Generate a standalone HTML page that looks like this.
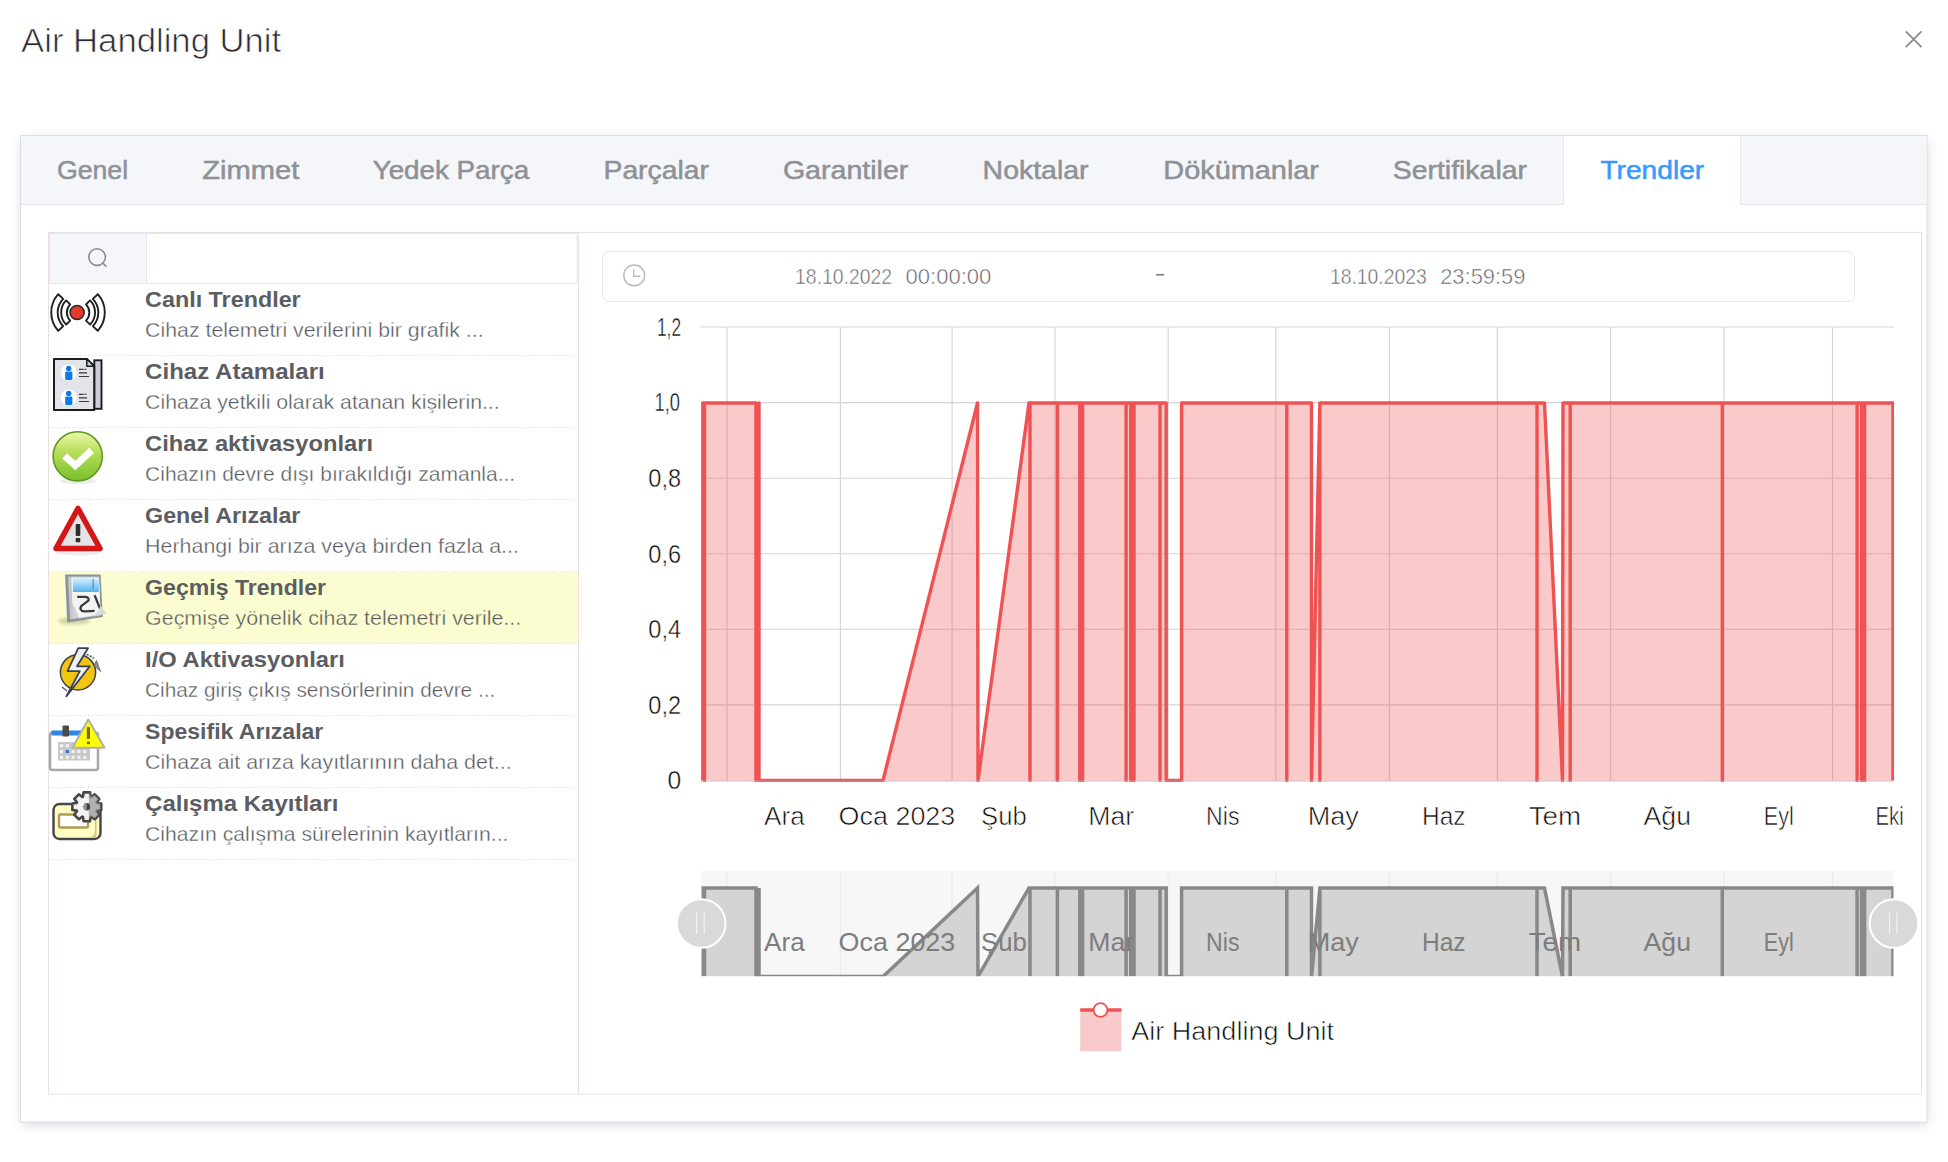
<!DOCTYPE html>
<html><head><meta charset="utf-8"><title>Air Handling Unit</title>
<style>
html,body{margin:0;padding:0;background:#fff;width:1948px;height:1162px;overflow:hidden;}
svg{position:absolute;left:0;top:0;display:block;}
text{font-family:"Liberation Sans",sans-serif;}
</style></head><body>
<svg width="1948" height="1162" viewBox="0 0 1948 1162">
<defs>
<filter id="shadow" x="-5%" y="-5%" width="110%" height="110%"><feGaussianBlur stdDeviation="6"/></filter>
<linearGradient id="gGreen" x1="0" y1="0" x2="0" y2="1"><stop offset="0" stop-color="#eef7a8"/><stop offset="0.45" stop-color="#b3dc55"/><stop offset="1" stop-color="#78bf2c"/></linearGradient>
<linearGradient id="gBlue" x1="0" y1="0" x2="0" y2="1"><stop offset="0" stop-color="#d6f0ff"/><stop offset="1" stop-color="#52b4f0"/></linearGradient>
<filter id="blur2" x="-50%" y="-50%" width="200%" height="200%"><feGaussianBlur stdDeviation="1.8"/></filter>
<clipPath id="plotclip"><rect x="701" y="300" width="1193" height="482"/></clipPath>
<clipPath id="navclip"><rect x="701.5" y="860" width="1192" height="116.3"/></clipPath>
</defs>
<text x="21.1" y="51.8" font-size="32.7" fill="#2b2b30" textLength="260.1" lengthAdjust="spacingAndGlyphs" text-anchor="start" stroke="#fff" stroke-width="0.7">Air Handling Unit</text>
<path d="M1905.8 31.4 L1921.5 47.2 M1921.5 31.4 L1905.8 47.2" stroke="#8a8d93" stroke-width="1.8" fill="none"/>
<rect x="21" y="139" width="1906" height="986" fill="#000" opacity="0.14" filter="url(#shadow)"/>
<rect x="20.5" y="135.5" width="1906.5" height="986.5" fill="#fff" stroke="#dcdee7" stroke-width="1"/>
<rect x="21" y="136" width="1905.5" height="68.5" fill="#f5f6fa"/>
<line x1="21" y1="204.5" x2="1926.5" y2="204.5" stroke="#e4e6ef" stroke-width="1"/>
<rect x="1563.5" y="136" width="177" height="69.5" fill="#fff"/>
<line x1="1563.5" y1="136" x2="1563.5" y2="205" stroke="#e4e6ef" stroke-width="1"/>
<line x1="1740.5" y1="136" x2="1740.5" y2="205" stroke="#e4e6ef" stroke-width="1"/>
<text x="56.9" y="178.9" font-size="25.6" fill="#8e9196" textLength="71.2" lengthAdjust="spacingAndGlyphs" text-anchor="start" stroke="#8e9196" stroke-width="0.5">Genel</text>
<text x="202.3" y="178.9" font-size="25.6" fill="#8e9196" textLength="97.1" lengthAdjust="spacingAndGlyphs" text-anchor="start" stroke="#8e9196" stroke-width="0.5">Zimmet</text>
<text x="372.7" y="178.9" font-size="25.6" fill="#8e9196" textLength="156.4" lengthAdjust="spacingAndGlyphs" text-anchor="start" stroke="#8e9196" stroke-width="0.5">Yedek Parça</text>
<text x="603.5" y="178.9" font-size="25.6" fill="#8e9196" textLength="105.4" lengthAdjust="spacingAndGlyphs" text-anchor="start" stroke="#8e9196" stroke-width="0.5">Parçalar</text>
<text x="782.9" y="178.9" font-size="25.6" fill="#8e9196" textLength="125.4" lengthAdjust="spacingAndGlyphs" text-anchor="start" stroke="#8e9196" stroke-width="0.5">Garantiler</text>
<text x="982.6" y="178.9" font-size="25.6" fill="#8e9196" textLength="105.9" lengthAdjust="spacingAndGlyphs" text-anchor="start" stroke="#8e9196" stroke-width="0.5">Noktalar</text>
<text x="1163.3" y="178.9" font-size="25.6" fill="#8e9196" textLength="155.7" lengthAdjust="spacingAndGlyphs" text-anchor="start" stroke="#8e9196" stroke-width="0.5">Dökümanlar</text>
<text x="1392.7" y="178.9" font-size="25.6" fill="#8e9196" textLength="134.3" lengthAdjust="spacingAndGlyphs" text-anchor="start" stroke="#8e9196" stroke-width="0.5">Sertifikalar</text>
<text x="1600.4" y="178.9" font-size="25.6" fill="#3699ff" textLength="103.8" lengthAdjust="spacingAndGlyphs" text-anchor="start" stroke="#3699ff" stroke-width="0.5">Trendler</text>
<rect x="48.5" y="232.5" width="530" height="861.5" fill="#fff" stroke="#ecdfe2" stroke-width="1"/>
<rect x="578.5" y="232.5" width="1343" height="861.5" fill="none" stroke="#ecdfe2" stroke-width="1"/>
<rect x="49" y="233.5" width="97.5" height="50" fill="#f5f6fa"/>
<rect x="49.5" y="233.5" width="527.5" height="50" fill="none" stroke="#e4e6ef" stroke-width="1"/>
<line x1="146.5" y1="233.5" x2="146.5" y2="283.5" stroke="#e4e6ef" stroke-width="1"/>
<circle cx="97.1" cy="257.1" r="8.3" fill="none" stroke="#8a8a8e" stroke-width="1.6"/>
<line x1="103" y1="263.3" x2="106.3" y2="266.6" stroke="#8a8a8e" stroke-width="1.6"/>
<rect x="49" y="572" width="529" height="71.5" fill="#fbfcd0"/>
<text x="145.1" y="307.1" font-size="22.4" fill="#5b5d63" font-weight="bold" textLength="155.6" lengthAdjust="spacingAndGlyphs" text-anchor="start" >Canlı Trendler</text>
<text x="145.1" y="336.8" font-size="20.3" fill="#55575d" textLength="338.5" lengthAdjust="spacingAndGlyphs" text-anchor="start" stroke="#fff" stroke-width="0.35">Cihaz telemetri verilerini bir grafik ...</text>
<line x1="49" y1="355.5" x2="578" y2="355.5" stroke="#e6d9dc" stroke-width="1.2" stroke-dasharray="1.3 2.6"/>
<text x="145.1" y="379.1" font-size="22.4" fill="#5b5d63" font-weight="bold" textLength="179.6" lengthAdjust="spacingAndGlyphs" text-anchor="start" >Cihaz Atamaları</text>
<text x="145.1" y="408.8" font-size="20.3" fill="#55575d" textLength="354.6" lengthAdjust="spacingAndGlyphs" text-anchor="start" stroke="#fff" stroke-width="0.35">Cihaza yetkili olarak atanan kişilerin...</text>
<line x1="49" y1="427.5" x2="578" y2="427.5" stroke="#e6d9dc" stroke-width="1.2" stroke-dasharray="1.3 2.6"/>
<text x="145.1" y="451.1" font-size="22.4" fill="#5b5d63" font-weight="bold" textLength="227.9" lengthAdjust="spacingAndGlyphs" text-anchor="start" >Cihaz aktivasyonları</text>
<text x="145.1" y="480.8" font-size="20.3" fill="#55575d" textLength="370.1" lengthAdjust="spacingAndGlyphs" text-anchor="start" stroke="#fff" stroke-width="0.35">Cihazın devre dışı bırakıldığı zamanla...</text>
<line x1="49" y1="499.5" x2="578" y2="499.5" stroke="#e6d9dc" stroke-width="1.2" stroke-dasharray="1.3 2.6"/>
<text x="145.1" y="523.1" font-size="22.4" fill="#5b5d63" font-weight="bold" textLength="155.3" lengthAdjust="spacingAndGlyphs" text-anchor="start" >Genel Arızalar</text>
<text x="145.1" y="552.8" font-size="20.3" fill="#55575d" textLength="373.8" lengthAdjust="spacingAndGlyphs" text-anchor="start" stroke="#fff" stroke-width="0.35">Herhangi bir arıza veya birden fazla a...</text>
<line x1="49" y1="571.5" x2="578" y2="571.5" stroke="#e6d9dc" stroke-width="1.2" stroke-dasharray="1.3 2.6"/>
<text x="145.1" y="595.1" font-size="22.4" fill="#5b5d63" font-weight="bold" textLength="180.9" lengthAdjust="spacingAndGlyphs" text-anchor="start" >Geçmiş Trendler</text>
<text x="145.1" y="624.8" font-size="20.3" fill="#55575d" textLength="376.1" lengthAdjust="spacingAndGlyphs" text-anchor="start" stroke="#fbfcd0" stroke-width="0.35">Geçmişe yönelik cihaz telemetri verile...</text>
<line x1="49" y1="643.5" x2="578" y2="643.5" stroke="#e6d9dc" stroke-width="1.2" stroke-dasharray="1.3 2.6"/>
<text x="145.1" y="667.1" font-size="22.4" fill="#5b5d63" font-weight="bold" textLength="199.8" lengthAdjust="spacingAndGlyphs" text-anchor="start" >I/O Aktivasyonları</text>
<text x="145.1" y="696.8" font-size="20.3" fill="#55575d" textLength="350.2" lengthAdjust="spacingAndGlyphs" text-anchor="start" stroke="#fff" stroke-width="0.35">Cihaz giriş çıkış sensörlerinin devre ...</text>
<line x1="49" y1="715.5" x2="578" y2="715.5" stroke="#e6d9dc" stroke-width="1.2" stroke-dasharray="1.3 2.6"/>
<text x="145.1" y="739.1" font-size="22.4" fill="#5b5d63" font-weight="bold" textLength="178.2" lengthAdjust="spacingAndGlyphs" text-anchor="start" >Spesifik Arızalar</text>
<text x="145.1" y="768.8" font-size="20.3" fill="#55575d" textLength="366.6" lengthAdjust="spacingAndGlyphs" text-anchor="start" stroke="#fff" stroke-width="0.35">Cihaza ait arıza kayıtlarının daha det...</text>
<line x1="49" y1="787.5" x2="578" y2="787.5" stroke="#e6d9dc" stroke-width="1.2" stroke-dasharray="1.3 2.6"/>
<text x="145.1" y="811.1" font-size="22.4" fill="#5b5d63" font-weight="bold" textLength="193.3" lengthAdjust="spacingAndGlyphs" text-anchor="start" >Çalışma Kayıtları</text>
<text x="145.1" y="840.8" font-size="20.3" fill="#55575d" textLength="363.3" lengthAdjust="spacingAndGlyphs" text-anchor="start" stroke="#fff" stroke-width="0.35">Cihazın çalışma sürelerinin kayıtların...</text>
<line x1="49" y1="859.5" x2="578" y2="859.5" stroke="#e6d9dc" stroke-width="1.2" stroke-dasharray="1.3 2.6"/>
<!-- icon1 broadcast -->
<g transform="translate(44,286)">
 <g fill="none" stroke-linecap="butt">
  <path d="M13.2 19.3 A14 14 0 0 0 13.2 33.7" stroke="#222" stroke-width="0"/>
 </g>
 <!-- left outer arc -->
 <path d="M14.2 8.2 L19.2 12.9 A19.5 19.5 0 0 0 19.2 40.1 L14.2 44.8 A27.5 27.5 0 0 1 14.2 8.2 Z" fill="#fff" stroke="#202020" stroke-width="1.9" stroke-linejoin="round"/>
 <!-- left inner arc -->
 <path d="M22.1 14.4 L26.2 18.4 A11.5 11.5 0 0 0 26.2 34.6 L22.1 38.6 A17.3 17.3 0 0 1 22.1 14.4 Z" fill="#fff" stroke="#202020" stroke-width="1.9" stroke-linejoin="round"/>
 <!-- right inner -->
 <path d="M46.1 14.4 L42 18.4 A11.5 11.5 0 0 1 42 34.6 L46.1 38.6 A17.3 17.3 0 0 0 46.1 14.4 Z" fill="#fff" stroke="#202020" stroke-width="1.9" stroke-linejoin="round"/>
 <!-- right outer -->
 <path d="M53.8 8.2 L48.8 12.9 A19.5 19.5 0 0 1 48.8 40.1 L53.8 44.8 A27.5 27.5 0 0 0 53.8 8.2 Z" fill="#fff" stroke="#202020" stroke-width="1.9" stroke-linejoin="round"/>
 <circle cx="33.1" cy="26.5" r="7" fill="#e63a2a" stroke="#2a2a2a" stroke-width="1.6"/>
</g>
<!-- icon2 documents -->
<g transform="translate(44,356)">
 <rect x="50.3" y="4.3" width="7.2" height="48.5" fill="#cdcdd8" stroke="#1c1c1c" stroke-width="1.9"/>
 <path d="M10 2.9 H42.8 L50.2 10.3 V54 H10 Z" fill="#e3e3ea" stroke="#1c1c1c" stroke-width="2" stroke-linejoin="round"/>
 <path d="M42.8 2.9 V10.3 H50.2 Z" fill="#bfd9ea" stroke="#1c1c1c" stroke-width="1.5" stroke-linejoin="round"/>
 <circle cx="24.7" cy="16.5" r="8" fill="#fff"/>
 <circle cx="24.7" cy="12.4" r="2.7" fill="#0a7be6"/>
 <rect x="21.2" y="15.5" width="7.2" height="8.4" rx="1.3" fill="#0a7be6"/>
 <path d="M34.9 13.3 H39.6 M40.6 13.3 H42.4 M34.9 16.9 H43.1 M34.9 20.5 H45" stroke="#3a3a3a" stroke-width="1.2"/>
 <circle cx="24.7" cy="41.5" r="8" fill="#fff"/>
 <circle cx="24.7" cy="37.4" r="2.7" fill="#0a7be6"/>
 <rect x="21.2" y="40.5" width="7.2" height="8.4" rx="1.3" fill="#0a7be6"/>
 <path d="M34.9 38.3 H39.6 M40.6 38.3 H42.4 M34.9 41.9 H43.1 M34.9 45.5 H45" stroke="#3a3a3a" stroke-width="1.2"/>
</g>
<!-- icon3 green check -->
<g transform="translate(44,428)">
 <ellipse cx="34" cy="53" rx="18" ry="3" fill="#000" opacity="0.08"/>
 <circle cx="33.7" cy="28.3" r="24.6" fill="url(#gGreen)" stroke="#5c9a22" stroke-width="1.6"/>
 <path d="M20.6 27.9 L31.3 37.6 L47.6 22.4" fill="none" stroke="#fff" stroke-width="7" stroke-linejoin="miter"/>
</g>
<!-- icon4 warning -->
<g transform="translate(44,500)">
 <ellipse cx="34" cy="53" rx="22" ry="2.5" fill="#000" opacity="0.08"/>
 <path d="M34 8.5 L56 48.5 H12 Z" fill="#e3e3e3" stroke="#d41616" stroke-width="5.6" stroke-linejoin="round"/>
 <rect x="31.7" y="24" width="4.6" height="12" rx="1" fill="#2e2e2e"/>
 <rect x="31.7" y="38" width="4.6" height="4.2" rx="1" fill="#2e2e2e"/>
</g>
<!-- icon5 calendar 21 -->
<g transform="translate(44,572)">
 <ellipse cx="30" cy="49" rx="16" ry="3.5" fill="#5a5a20" opacity="0.25" filter="url(#blur2)"/>
 <path d="M21.1 2.4 H56.6 L58.8 45 L23.2 50.6 Z" fill="#8c9299"/>
 <path d="M24 4.6 H55 L57 43.4 L26 47.6 Z" fill="#c3c6ca"/>
 <path d="M27.4 5.5 H55 L56.4 38 L62.6 41.6 L35 45.8 L28.3 31 Z" fill="#f4f4f4"/>
 <path d="M28.3 31 L35 45.8 L28.6 46 Z" fill="#d0d2d5"/>
 <rect x="28.9" y="6.1" width="25.9" height="13.9" fill="url(#gBlue)"/>
 <path d="M49.2 7 V17.5" stroke="#4b7fa6" stroke-width="1.4" opacity="0.7"/>
 <path d="M33.2 24.9 H41 Q45 25 44.6 28.3 L37.2 34.2 Q35.6 36.8 37.6 38.6 Q38.6 39.4 41 39.3 L50.6 38.9" fill="none" stroke="#3c3c3c" stroke-width="2.3" stroke-linejoin="round"/>
 <path d="M50.6 23.2 L56.9 38.6" fill="none" stroke="#3c3c3c" stroke-width="2.3"/>
 <path d="M49 44 L62.6 41.6 L56.4 33.5 Q55 40 49 44 Z" fill="#d9d9d9"/>
</g>
<!-- icon6 lightning -->
<g transform="translate(44,644)">
 <circle cx="34" cy="28.3" r="17.6" fill="#f2c511" stroke="#3c4150" stroke-width="1.5"/>
 <path d="M42.5 10.5 A20 20 0 0 1 50 14.5" fill="none" stroke="#555b66" stroke-width="1.6" stroke-dasharray="2.2 1.2"/>
 <path d="M52.5 16.5 L56.5 27.5 L50 21.5 Z" fill="#8a8f99" stroke="#555b66" stroke-width="0.8"/>
 <path d="M18 43 L23 47" fill="none" stroke="#555b66" stroke-width="1.4"/>
 <path d="M34.3 4.2 H44 L33 22.3 H45.8 L22.3 52.4 L35.8 27.1 H23.5 Z" fill="#eef0f2" stroke="#3c4150" stroke-width="1.8" stroke-linejoin="round"/>
</g>
<!-- icon7 calendar warning -->
<g transform="translate(44,714)">
 <rect x="6" y="18.5" width="48" height="37.5" rx="2.5" fill="#fff" stroke="#a8a8a8" stroke-width="2.5"/>
 <rect x="7.5" y="16.5" width="30" height="5" fill="#2f86e6"/>
 <rect x="18.5" y="11.5" width="6.5" height="11" rx="1" fill="#4a4a4a"/>
 <rect x="14" y="28" width="32" height="18.5" fill="#c8c8c8"/>
 <g fill="#f4f4f4">
  <rect x="16" y="30.2" width="3" height="3"/><rect x="21.8" y="30.2" width="3" height="3"/>
  <rect x="16" y="36" width="3" height="3"/><rect x="27.6" y="36" width="3" height="3"/><rect x="33.4" y="36" width="3" height="3"/><rect x="39.2" y="36" width="3" height="3"/>
  <rect x="16" y="41.8" width="3" height="3"/><rect x="21.8" y="41.8" width="3" height="3"/><rect x="27.6" y="41.8" width="3" height="3"/><rect x="33.4" y="41.8" width="3" height="3"/><rect x="39.2" y="41.8" width="3" height="3"/>
 </g>
 <rect x="21.8" y="36" width="3" height="3" fill="#2f6fd6"/>
 <path d="M44.3 5.5 L60.5 33.8 H28.5 Z" fill="#ffff00" stroke="#b0b0b0" stroke-width="2" stroke-linejoin="round"/>
 <rect x="42.8" y="13" width="3.2" height="12" rx="1" fill="#6f6a20"/>
 <rect x="42.8" y="27.5" width="3.2" height="2.8" rx="1" fill="#6f6a20"/>
</g>
<!-- icon8 folder gear -->
<g transform="translate(44,786)">
 <rect x="9.5" y="18" width="47" height="35" rx="6" fill="#fdfcc3" stroke="#474747" stroke-width="2.4"/>
 <path d="M52.5 30 V49 Q52 51 49 51.5 L46 51.5 Q51 50 51 45 V30 Z" fill="#dcc07a"/>
 <rect x="15" y="28.5" width="29" height="13" rx="1.2" fill="#fff" stroke="#b39a58" stroke-width="2.4"/>
 <g transform="translate(42.8,20.8)">
  <path d="M-3.80 -10.11 L-3.23 -14.44 L3.23 -14.44 L3.80 -10.11 L4.46 -9.84 L7.93 -12.50 L12.50 -7.93 L9.84 -4.46 L10.11 -3.80 L14.44 -3.23 L14.44 3.23 L10.11 3.80 L9.84 4.46 L12.50 7.93 L7.93 12.50 L4.46 9.84 L3.80 10.11 L3.23 14.44 L-3.23 14.44 L-3.80 10.11 L-4.46 9.84 L-7.93 12.50 L-12.50 7.93 L-9.84 4.46 L-10.11 3.80 L-14.44 3.23 L-14.44 -3.23 L-10.11 -3.80 L-9.84 -4.46 L-12.50 -7.93 L-7.93 -12.50 L-4.46 -9.84 Z" fill="#f3f3f3" stroke="#474747" stroke-width="2.6" stroke-linejoin="round"/>
  <path d="M2 -13 L3.2 -13.5 L3.8 -10 L7.9 -11.5 L11.8 -7.9 L9.4 -4.2 L13.4 -3 L13.4 3 L9.6 4 L11.5 8 L8 11.5 L4.2 9.5 L2 12 Z" fill="#9a9a9a" opacity="0.75"/>
  <ellipse cx="0" cy="0" rx="3.3" ry="3.8" fill="#3f3f3f"/>
  <path d="M0 -3.8 A3.3 3.8 0 0 0 0 3.8 Z" fill="#8f8f8f"/>
</g>
</g>
<rect x="602.5" y="251.5" width="1252" height="50" rx="6.5" fill="#fff" stroke="#e4e6ef" stroke-width="1"/>
<circle cx="634.2" cy="275.4" r="10.4" fill="none" stroke="#b5bac5" stroke-width="1.4"/>
<path d="M633.6 269.2 V276.3 H640.3" fill="none" stroke="#b5bac5" stroke-width="1.4"/>
<text x="795.1" y="284.1" font-size="22.8" fill="#5f6065" textLength="97.0" lengthAdjust="spacingAndGlyphs" text-anchor="start" stroke="#fff" stroke-width="0.55">18.10.2022</text>
<text x="905.5" y="284.1" font-size="22.8" fill="#5f6065" textLength="85.8" lengthAdjust="spacingAndGlyphs" text-anchor="start" stroke="#fff" stroke-width="0.55">00:00:00</text>
<line x1="1156.2" y1="274.8" x2="1164.2" y2="274.8" stroke="#66676b" stroke-width="1.4"/>
<text x="1329.9" y="284.1" font-size="22.8" fill="#5f6065" textLength="96.9" lengthAdjust="spacingAndGlyphs" text-anchor="start" stroke="#fff" stroke-width="0.55">18.10.2023</text>
<text x="1440.2" y="284.1" font-size="22.8" fill="#5f6065" textLength="85.3" lengthAdjust="spacingAndGlyphs" text-anchor="start" stroke="#fff" stroke-width="0.55">23:59:59</text>
<line x1="701" y1="327.0" x2="1893.5" y2="327.0" stroke="#d3d3d3" stroke-width="1.1"/>
<line x1="701" y1="402.6" x2="1893.5" y2="402.6" stroke="#d3d3d3" stroke-width="1.1"/>
<line x1="701" y1="478.2" x2="1893.5" y2="478.2" stroke="#d3d3d3" stroke-width="1.1"/>
<line x1="701" y1="553.8" x2="1893.5" y2="553.8" stroke="#d3d3d3" stroke-width="1.1"/>
<line x1="701" y1="629.3" x2="1893.5" y2="629.3" stroke="#d3d3d3" stroke-width="1.1"/>
<line x1="701" y1="704.9" x2="1893.5" y2="704.9" stroke="#d3d3d3" stroke-width="1.1"/>
<line x1="727.0" y1="327" x2="727.0" y2="781" stroke="#d3d3d3" stroke-width="1.1"/>
<line x1="840.4" y1="327" x2="840.4" y2="781" stroke="#d3d3d3" stroke-width="1.1"/>
<line x1="952.1" y1="327" x2="952.1" y2="781" stroke="#d3d3d3" stroke-width="1.1"/>
<line x1="1055.0" y1="327" x2="1055.0" y2="781" stroke="#d3d3d3" stroke-width="1.1"/>
<line x1="1168.2" y1="327" x2="1168.2" y2="781" stroke="#d3d3d3" stroke-width="1.1"/>
<line x1="1275.8" y1="327" x2="1275.8" y2="781" stroke="#d3d3d3" stroke-width="1.1"/>
<line x1="1389.4" y1="327" x2="1389.4" y2="781" stroke="#d3d3d3" stroke-width="1.1"/>
<line x1="1497.4" y1="327" x2="1497.4" y2="781" stroke="#d3d3d3" stroke-width="1.1"/>
<line x1="1610.6" y1="327" x2="1610.6" y2="781" stroke="#d3d3d3" stroke-width="1.1"/>
<line x1="1724.0" y1="327" x2="1724.0" y2="781" stroke="#d3d3d3" stroke-width="1.1"/>
<line x1="1832.5" y1="327" x2="1832.5" y2="781" stroke="#d3d3d3" stroke-width="1.1"/>
<g clip-path="url(#plotclip)"><path d="M701.5 780.5 L702.8 780.5 L702.8 403.0 L704.5 403.0 L704.5 780.5 L704.5 403.0 L756.0 403.0 L756.0 780.5 L759.0 780.5 L759.0 403.0 L759.0 780.5 L883.0 780.5 L977.5 403.0 L978.0 780.5 L1029.0 403.0 L1030.0 403.0 L1030.0 780.5 L1030.0 403.0 L1057.4 403.0 L1057.4 780.5 L1057.4 403.0 L1079.8 403.0 L1079.8 780.5 L1079.8 403.0 L1082.6 403.0 L1082.6 780.5 L1082.6 403.0 L1126.1 403.0 L1126.1 780.5 L1126.1 403.0 L1130.8 403.0 L1130.8 780.5 L1130.8 403.0 L1134.0 403.0 L1134.0 780.5 L1134.0 403.0 L1160.0 403.0 L1160.0 780.5 L1160.0 403.0 L1166.2 403.0 L1166.2 780.5 L1181.6 780.5 L1181.6 403.0 L1286.8 403.0 L1286.8 780.5 L1286.8 403.0 L1311.5 403.0 L1311.5 780.5 L1319.9 403.0 L1319.9 780.5 L1319.9 403.0 L1537.0 403.0 L1537.0 780.5 L1537.0 403.0 L1544.5 403.0 L1562.5 780.5 L1563.0 403.0 L1570.2 403.0 L1570.2 780.5 L1570.2 403.0 L1722.3 403.0 L1722.3 780.5 L1722.3 403.0 L1857.1 403.0 L1857.1 780.5 L1857.1 403.0 L1861.5 403.0 L1861.5 780.5 L1861.5 403.0 L1864.6 403.0 L1864.6 780.5 L1864.6 403.0 L1893.0 403.0 L1893.0 780.5 L1893.3 780.5 Z" fill="rgba(240,80,80,0.3)" stroke="none"/>
<path d="M702.8 780.5 L702.8 403.0 L704.5 403.0 L704.5 780.5 L704.5 403.0 L756.0 403.0 L756.0 780.5 L759.0 780.5 L759.0 403.0 L759.0 780.5 L883.0 780.5 L977.5 403.0 L978.0 780.5 L1029.0 403.0 L1030.0 403.0 L1030.0 780.5 L1030.0 403.0 L1057.4 403.0 L1057.4 780.5 L1057.4 403.0 L1079.8 403.0 L1079.8 780.5 L1079.8 403.0 L1082.6 403.0 L1082.6 780.5 L1082.6 403.0 L1126.1 403.0 L1126.1 780.5 L1126.1 403.0 L1130.8 403.0 L1130.8 780.5 L1130.8 403.0 L1134.0 403.0 L1134.0 780.5 L1134.0 403.0 L1160.0 403.0 L1160.0 780.5 L1160.0 403.0 L1166.2 403.0 L1166.2 780.5 L1181.6 780.5 L1181.6 403.0 L1286.8 403.0 L1286.8 780.5 L1286.8 403.0 L1311.5 403.0 L1311.5 780.5 L1319.9 403.0 L1319.9 780.5 L1319.9 403.0 L1537.0 403.0 L1537.0 780.5 L1537.0 403.0 L1544.5 403.0 L1562.5 780.5 L1563.0 403.0 L1570.2 403.0 L1570.2 780.5 L1570.2 403.0 L1722.3 403.0 L1722.3 780.5 L1722.3 403.0 L1857.1 403.0 L1857.1 780.5 L1857.1 403.0 L1861.5 403.0 L1861.5 780.5 L1861.5 403.0 L1864.6 403.0 L1864.6 780.5 L1864.6 403.0 L1893.0 403.0 L1893.0 780.5" fill="none" stroke="#ee5253" stroke-width="3.4" stroke-linejoin="round"/>
</g><line x1="701" y1="781" x2="1893.5" y2="781" stroke="#c9a3a3" stroke-width="1.2" opacity="0.8"/>
<text x="657.0" y="335.8" font-size="25.4" fill="#0a0a0a" textLength="24.0" lengthAdjust="spacingAndGlyphs" text-anchor="start" stroke="#fff" stroke-width="0.45">1,2</text>
<text x="654.5" y="411.4" font-size="25.4" fill="#0a0a0a" textLength="25.4" lengthAdjust="spacingAndGlyphs" text-anchor="start" stroke="#fff" stroke-width="0.45">1,0</text>
<text x="648.3" y="487.0" font-size="25.4" fill="#0a0a0a" textLength="32.7" lengthAdjust="spacingAndGlyphs" text-anchor="start" stroke="#fff" stroke-width="0.45">0,8</text>
<text x="648.3" y="562.6" font-size="25.4" fill="#0a0a0a" textLength="32.7" lengthAdjust="spacingAndGlyphs" text-anchor="start" stroke="#fff" stroke-width="0.45">0,6</text>
<text x="648.3" y="638.1" font-size="25.4" fill="#0a0a0a" textLength="32.7" lengthAdjust="spacingAndGlyphs" text-anchor="start" stroke="#fff" stroke-width="0.45">0,4</text>
<text x="648.3" y="713.7" font-size="25.4" fill="#0a0a0a" textLength="32.7" lengthAdjust="spacingAndGlyphs" text-anchor="start" stroke="#fff" stroke-width="0.45">0,2</text>
<text x="667.5" y="789.3" font-size="25.4" fill="#0a0a0a" textLength="13.7" lengthAdjust="spacingAndGlyphs" text-anchor="start" stroke="#fff" stroke-width="0.45">0</text>
<text x="764.1" y="825.3" font-size="25.4" fill="#0a0a0a" textLength="40.6" lengthAdjust="spacingAndGlyphs" text-anchor="start" stroke="#fff" stroke-width="0.6">Ara</text>
<text x="838.6" y="825.3" font-size="25.4" fill="#0a0a0a" textLength="116.7" lengthAdjust="spacingAndGlyphs" text-anchor="start" stroke="#fff" stroke-width="0.6">Oca 2023</text>
<text x="981.0" y="825.3" font-size="25.4" fill="#0a0a0a" textLength="45.7" lengthAdjust="spacingAndGlyphs" text-anchor="start" stroke="#fff" stroke-width="0.6">Şub</text>
<text x="1088.3" y="825.3" font-size="25.4" fill="#0a0a0a" textLength="45.9" lengthAdjust="spacingAndGlyphs" text-anchor="start" stroke="#fff" stroke-width="0.6">Mar</text>
<text x="1206.1" y="825.3" font-size="25.4" fill="#0a0a0a" textLength="33.4" lengthAdjust="spacingAndGlyphs" text-anchor="start" stroke="#fff" stroke-width="0.6">Nis</text>
<text x="1307.8" y="825.3" font-size="25.4" fill="#0a0a0a" textLength="51.1" lengthAdjust="spacingAndGlyphs" text-anchor="start" stroke="#fff" stroke-width="0.6">May</text>
<text x="1422.0" y="825.3" font-size="25.4" fill="#0a0a0a" textLength="43.6" lengthAdjust="spacingAndGlyphs" text-anchor="start" stroke="#fff" stroke-width="0.6">Haz</text>
<text x="1528.7" y="825.3" font-size="25.4" fill="#0a0a0a" textLength="52.4" lengthAdjust="spacingAndGlyphs" text-anchor="start" stroke="#fff" stroke-width="0.6">Tem</text>
<text x="1643.5" y="825.3" font-size="25.4" fill="#0a0a0a" textLength="47.5" lengthAdjust="spacingAndGlyphs" text-anchor="start" stroke="#fff" stroke-width="0.6">Ağu</text>
<text x="1763.8" y="825.3" font-size="25.4" fill="#0a0a0a" textLength="30.1" lengthAdjust="spacingAndGlyphs" text-anchor="start" stroke="#fff" stroke-width="0.6">Eyl</text>
<text x="1875.4" y="825.3" font-size="25.4" fill="#0a0a0a" textLength="28.4" lengthAdjust="spacingAndGlyphs" text-anchor="start" stroke="#fff" stroke-width="0.6">Eki</text>
<rect x="701.5" y="870.5" width="1192" height="105.8" fill="#f7f7f7"/>
<line x1="727.0" y1="870.5" x2="727.0" y2="976.5" stroke="#ebebeb" stroke-width="1.3"/>
<line x1="840.4" y1="870.5" x2="840.4" y2="976.5" stroke="#ebebeb" stroke-width="1.3"/>
<line x1="952.1" y1="870.5" x2="952.1" y2="976.5" stroke="#ebebeb" stroke-width="1.3"/>
<line x1="1055.0" y1="870.5" x2="1055.0" y2="976.5" stroke="#ebebeb" stroke-width="1.3"/>
<line x1="1168.2" y1="870.5" x2="1168.2" y2="976.5" stroke="#ebebeb" stroke-width="1.3"/>
<line x1="1275.8" y1="870.5" x2="1275.8" y2="976.5" stroke="#ebebeb" stroke-width="1.3"/>
<line x1="1389.4" y1="870.5" x2="1389.4" y2="976.5" stroke="#ebebeb" stroke-width="1.3"/>
<line x1="1497.4" y1="870.5" x2="1497.4" y2="976.5" stroke="#ebebeb" stroke-width="1.3"/>
<line x1="1610.6" y1="870.5" x2="1610.6" y2="976.5" stroke="#ebebeb" stroke-width="1.3"/>
<line x1="1724.0" y1="870.5" x2="1724.0" y2="976.5" stroke="#ebebeb" stroke-width="1.3"/>
<line x1="1832.5" y1="870.5" x2="1832.5" y2="976.5" stroke="#ebebeb" stroke-width="1.3"/>
<g clip-path="url(#navclip)"><path d="M701.5 976.6 L702.8 976.6 L702.8 888.0 L704.5 888.0 L704.5 976.6 L704.5 888.0 L756.0 888.0 L756.0 976.6 L759.0 976.6 L759.0 888.0 L759.0 976.6 L883.0 976.6 L977.5 888.0 L978.0 976.6 L1029.0 888.0 L1030.0 888.0 L1030.0 976.6 L1030.0 888.0 L1057.4 888.0 L1057.4 976.6 L1057.4 888.0 L1079.8 888.0 L1079.8 976.6 L1079.8 888.0 L1082.6 888.0 L1082.6 976.6 L1082.6 888.0 L1126.1 888.0 L1126.1 976.6 L1126.1 888.0 L1130.8 888.0 L1130.8 976.6 L1130.8 888.0 L1134.0 888.0 L1134.0 976.6 L1134.0 888.0 L1160.0 888.0 L1160.0 976.6 L1160.0 888.0 L1166.2 888.0 L1166.2 976.6 L1181.6 976.6 L1181.6 888.0 L1286.8 888.0 L1286.8 976.6 L1286.8 888.0 L1311.5 888.0 L1311.5 976.6 L1319.9 888.0 L1319.9 976.6 L1319.9 888.0 L1537.0 888.0 L1537.0 976.6 L1537.0 888.0 L1544.5 888.0 L1562.5 976.6 L1563.0 888.0 L1570.2 888.0 L1570.2 976.6 L1570.2 888.0 L1722.3 888.0 L1722.3 976.6 L1722.3 888.0 L1857.1 888.0 L1857.1 976.6 L1857.1 888.0 L1861.5 888.0 L1861.5 976.6 L1861.5 888.0 L1864.6 888.0 L1864.6 976.6 L1864.6 888.0 L1893.0 888.0 L1893.0 976.6 L1893.3 976.6 Z" fill="#d4d4d4" stroke="none"/>
<path d="M702.8 976.6 L702.8 888.0 L704.5 888.0 L704.5 976.6 L704.5 888.0 L756.0 888.0 L756.0 976.6 L759.0 976.6 L759.0 888.0 L759.0 976.6 L883.0 976.6 L977.5 888.0 L978.0 976.6 L1029.0 888.0 L1030.0 888.0 L1030.0 976.6 L1030.0 888.0 L1057.4 888.0 L1057.4 976.6 L1057.4 888.0 L1079.8 888.0 L1079.8 976.6 L1079.8 888.0 L1082.6 888.0 L1082.6 976.6 L1082.6 888.0 L1126.1 888.0 L1126.1 976.6 L1126.1 888.0 L1130.8 888.0 L1130.8 976.6 L1130.8 888.0 L1134.0 888.0 L1134.0 976.6 L1134.0 888.0 L1160.0 888.0 L1160.0 976.6 L1160.0 888.0 L1166.2 888.0 L1166.2 976.6 L1181.6 976.6 L1181.6 888.0 L1286.8 888.0 L1286.8 976.6 L1286.8 888.0 L1311.5 888.0 L1311.5 976.6 L1319.9 888.0 L1319.9 976.6 L1319.9 888.0 L1537.0 888.0 L1537.0 976.6 L1537.0 888.0 L1544.5 888.0 L1562.5 976.6 L1563.0 888.0 L1570.2 888.0 L1570.2 976.6 L1570.2 888.0 L1722.3 888.0 L1722.3 976.6 L1722.3 888.0 L1857.1 888.0 L1857.1 976.6 L1857.1 888.0 L1861.5 888.0 L1861.5 976.6 L1861.5 888.0 L1864.6 888.0 L1864.6 976.6 L1864.6 888.0 L1893.0 888.0 L1893.0 976.6" fill="none" stroke="#888" stroke-width="3.5" stroke-linejoin="miter" stroke-miterlimit="6"/>
</g><text x="764.1" y="951.4" font-size="25.4" fill="#7d7d7d" textLength="40.6" lengthAdjust="spacingAndGlyphs" text-anchor="start" >Ara</text>
<text x="838.6" y="951.4" font-size="25.4" fill="#7d7d7d" textLength="116.7" lengthAdjust="spacingAndGlyphs" text-anchor="start" >Oca 2023</text>
<text x="981.0" y="951.4" font-size="25.4" fill="#7d7d7d" textLength="45.7" lengthAdjust="spacingAndGlyphs" text-anchor="start" >Şub</text>
<text x="1088.3" y="951.4" font-size="25.4" fill="#7d7d7d" textLength="45.9" lengthAdjust="spacingAndGlyphs" text-anchor="start" >Mar</text>
<text x="1206.1" y="951.4" font-size="25.4" fill="#7d7d7d" textLength="33.4" lengthAdjust="spacingAndGlyphs" text-anchor="start" >Nis</text>
<text x="1307.8" y="951.4" font-size="25.4" fill="#7d7d7d" textLength="51.1" lengthAdjust="spacingAndGlyphs" text-anchor="start" >May</text>
<text x="1422.0" y="951.4" font-size="25.4" fill="#7d7d7d" textLength="43.6" lengthAdjust="spacingAndGlyphs" text-anchor="start" >Haz</text>
<text x="1528.7" y="951.4" font-size="25.4" fill="#7d7d7d" textLength="52.4" lengthAdjust="spacingAndGlyphs" text-anchor="start" >Tem</text>
<text x="1643.5" y="951.4" font-size="25.4" fill="#7d7d7d" textLength="47.5" lengthAdjust="spacingAndGlyphs" text-anchor="start" >Ağu</text>
<text x="1763.8" y="951.4" font-size="25.4" fill="#7d7d7d" textLength="30.1" lengthAdjust="spacingAndGlyphs" text-anchor="start" >Eyl</text>
<circle cx="701.2" cy="923.5" r="24.3" fill="#d9d9d9" stroke="#fff" stroke-width="2"/>
<line x1="696.7" y1="912.6" x2="696.7" y2="933.8" stroke="#f2f2f2" stroke-width="1.3"/>
<line x1="704.2" y1="912.6" x2="704.2" y2="933.8" stroke="#f2f2f2" stroke-width="1.3"/>
<circle cx="1894.0" cy="923.5" r="24.3" fill="#d9d9d9" stroke="#fff" stroke-width="2"/>
<line x1="1889.5" y1="912.6" x2="1889.5" y2="933.8" stroke="#f2f2f2" stroke-width="1.3"/>
<line x1="1897.0" y1="912.6" x2="1897.0" y2="933.8" stroke="#f2f2f2" stroke-width="1.3"/>
<rect x="1080.2" y="1009.5" width="41.2" height="41.7" fill="rgba(240,80,80,0.3)"/>
<line x1="1080.2" y1="1010.1" x2="1121.4" y2="1010.1" stroke="#ee5253" stroke-width="3.5"/>
<circle cx="1100.5" cy="1010" r="6.9" fill="#fff" stroke="#ee5253" stroke-width="1.8"/>
<text x="1131.3" y="1039.6" font-size="25.7" fill="#0a0a0a" textLength="202.7" lengthAdjust="spacingAndGlyphs" text-anchor="start" stroke="#fff" stroke-width="0.6">Air Handling Unit</text>
</svg>
</body></html>
